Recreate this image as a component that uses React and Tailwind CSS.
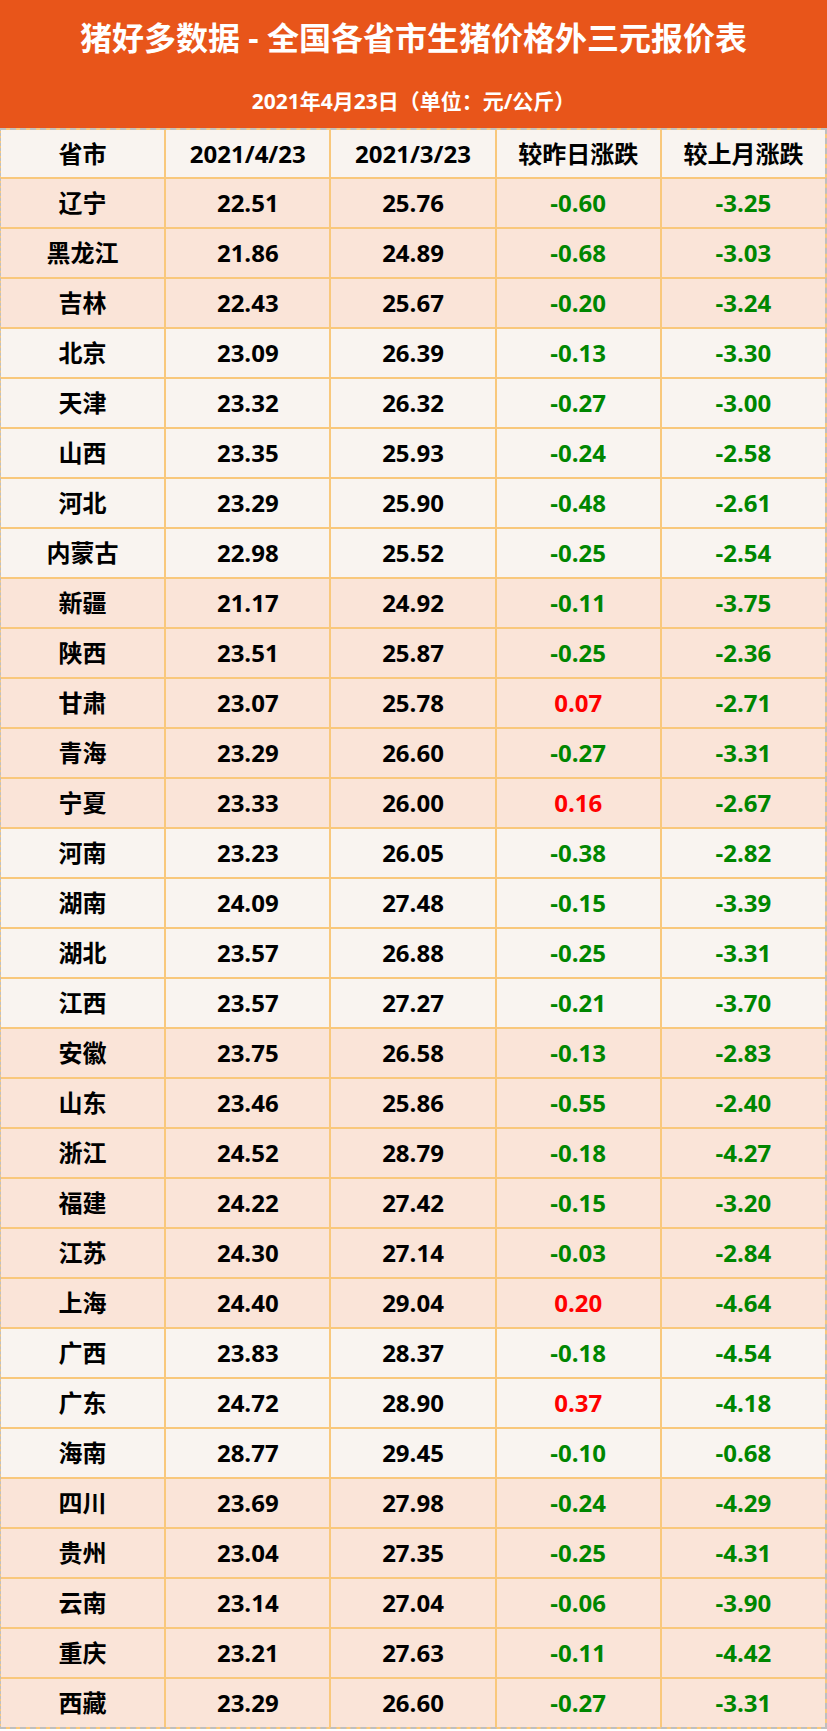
import React from "react";

// p = peach row, l = light row
const rows = [
   ["辽宁", "22.51", "25.76", "-0.60", "-3.25", "p"],
   ["黑龙江", "21.86", "24.89", "-0.68", "-3.03", "p"],
   ["吉林", "22.43", "25.67", "-0.20", "-3.24", "p"],
   ["北京", "23.09", "26.39", "-0.13", "-3.30", "l"],
   ["天津", "23.32", "26.32", "-0.27", "-3.00", "l"],
   ["山西", "23.35", "25.93", "-0.24", "-2.58", "l"],
   ["河北", "23.29", "25.90", "-0.48", "-2.61", "l"],
   ["内蒙古", "22.98", "25.52", "-0.25", "-2.54", "l"],
   ["新疆", "21.17", "24.92", "-0.11", "-3.75", "p"],
   ["陕西", "23.51", "25.87", "-0.25", "-2.36", "p"],
   ["甘肃", "23.07", "25.78", "0.07", "-2.71", "p"],
   ["青海", "23.29", "26.60", "-0.27", "-3.31", "p"],
   ["宁夏", "23.33", "26.00", "0.16", "-2.67", "p"],
   ["河南", "23.23", "26.05", "-0.38", "-2.82", "l"],
   ["湖南", "24.09", "27.48", "-0.15", "-3.39", "l"],
   ["湖北", "23.57", "26.88", "-0.25", "-3.31", "l"],
   ["江西", "23.57", "27.27", "-0.21", "-3.70", "l"],
   ["安徽", "23.75", "26.58", "-0.13", "-2.83", "p"],
   ["山东", "23.46", "25.86", "-0.55", "-2.40", "p"],
   ["浙江", "24.52", "28.79", "-0.18", "-4.27", "p"],
   ["福建", "24.22", "27.42", "-0.15", "-3.20", "p"],
   ["江苏", "24.30", "27.14", "-0.03", "-2.84", "p"],
   ["上海", "24.40", "29.04", "0.20", "-4.64", "p"],
   ["广西", "23.83", "28.37", "-0.18", "-4.54", "l"],
   ["广东", "24.72", "28.90", "0.37", "-4.18", "l"],
   ["海南", "28.77", "29.45", "-0.10", "-0.68", "l"],
   ["四川", "23.69", "27.98", "-0.24", "-4.29", "p"],
   ["贵州", "23.04", "27.35", "-0.25", "-4.31", "p"],
   ["云南", "23.14", "27.04", "-0.06", "-3.90", "p"],
   ["重庆", "23.21", "27.63", "-0.11", "-4.42", "p"],
   ["西藏", "23.29", "26.60", "-0.27", "-3.31", "p"],
];

function Change({ value }) {
   const up = !value.startsWith("-");
   return (
      <span className={up ? "text-[#ff0000]" : "text-[#008600]"}>{value}</span>
   );
}

export default function App() {
   return (
      <div className="w-[827px] h-[1731px] bg-white font-['Open_Sans','Noto_Sans_CJK_SC',sans-serif] font-bold">
         {/* Title */}
         <div className="h-[128px] bg-[#e8551a] text-white flex flex-col items-center">
            <div className="mt-[13px] text-[32px] leading-[50px]">
               猪好多数据 - 全国各省市生猪价格外三元报价表
            </div>
            <div className="mt-[24px] text-[21px] leading-[28px]">
               2021年4月23日（单位：元/公斤）
            </div>
         </div>

         {/* Table */}
         <div className="border-l border-r-2 border-t-2 border-b-2 border-dashed border-[#bfbfbf] bg-[#f9c87c]">
            <div className="grid grid-cols-5 gap-x-[2px] gap-y-[2px] text-black text-[24px]">
               {["省市", "2021/4/23", "2021/3/23", "较昨日涨跌", "较上月涨跌"].map((h) => (
                  <div
                     key={h}
                     className="h-[47px] bg-[#f9f4f0] flex items-center justify-center"
                  >
                     {h}
                  </div>
               ))}
               {rows.map((r) => {
                  const bg = r[5] === "p" ? "bg-[#fae4d8]" : "bg-[#f9f4f0]";
                  return (
                     <React.Fragment key={r[0]}>
                        <div className={"h-[48px] flex items-center justify-center " + bg}>
                           {r[0]}
                        </div>
                        <div className={"h-[48px] flex items-center justify-center " + bg}>
                           {r[1]}
                        </div>
                        <div className={"h-[48px] flex items-center justify-center " + bg}>
                           {r[2]}
                        </div>
                        <div className={"h-[48px] flex items-center justify-center " + bg}>
                           <Change value={r[3]} />
                        </div>
                        <div className={"h-[48px] flex items-center justify-center " + bg}>
                           <Change value={r[4]} />
                        </div>
                     </React.Fragment>
                  );
               })}
            </div>
         </div>
      </div>
   );
}
